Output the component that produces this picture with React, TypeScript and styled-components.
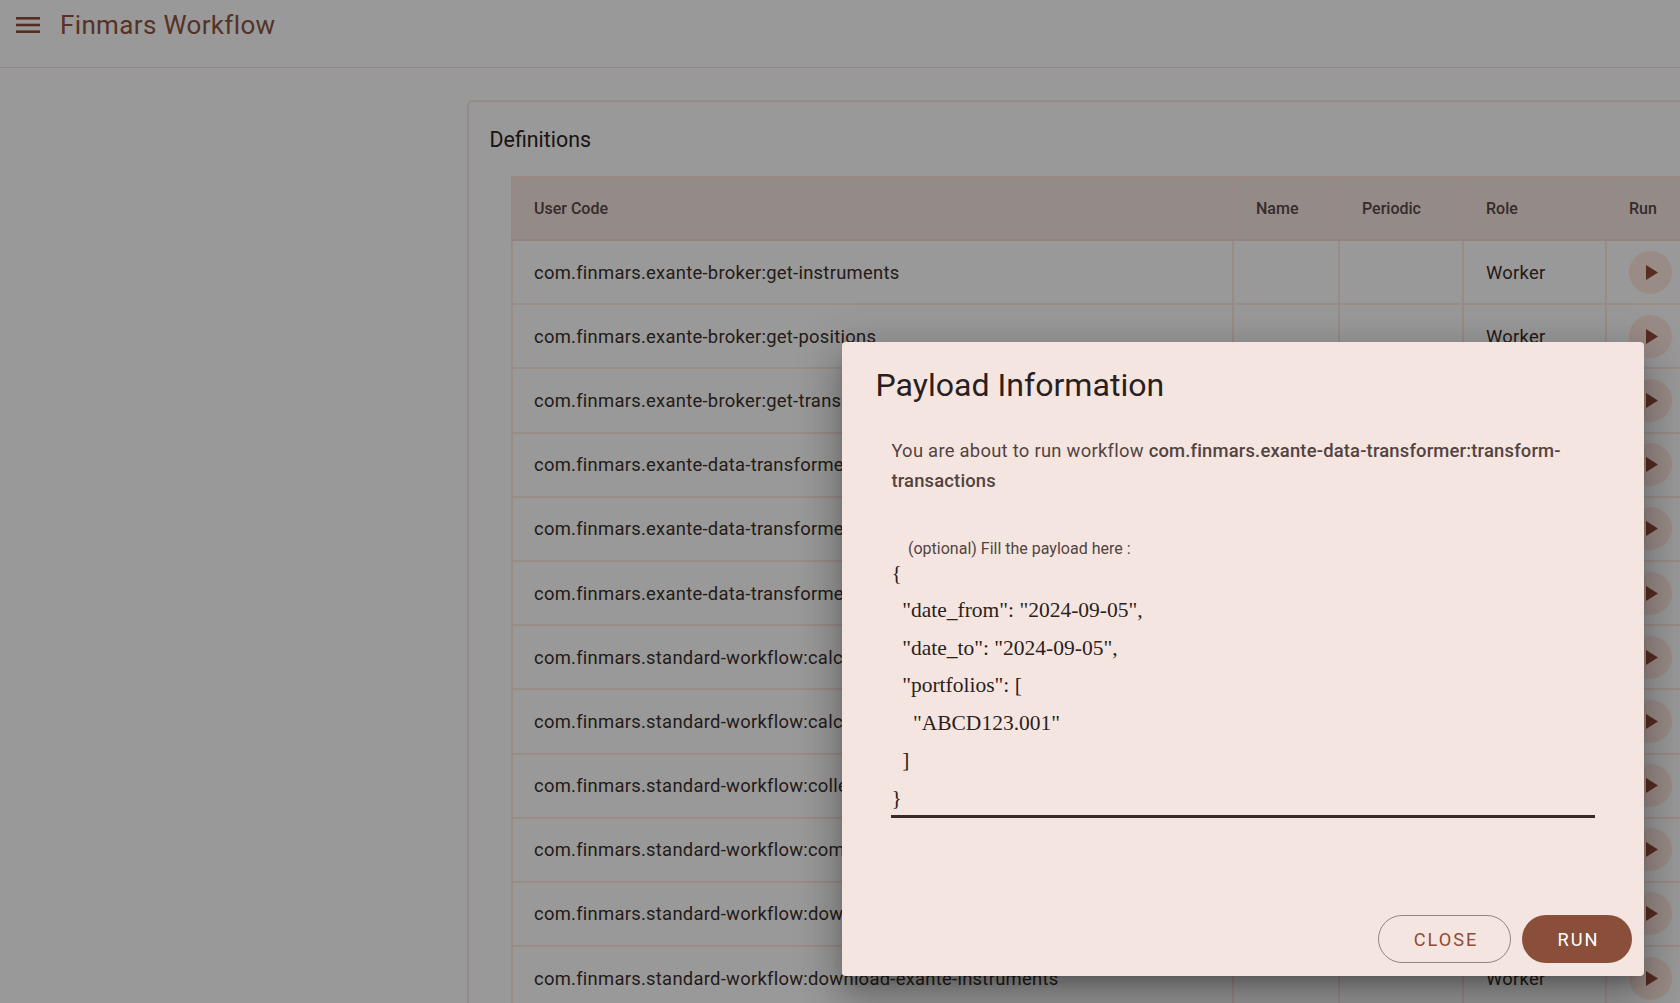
import React from "react";
import styled, { createGlobalStyle } from "styled-components";

const Global = createGlobalStyle`
  html, body { margin: 0; padding: 0; height: 100%; overflow: hidden; background: #fff; }
  body { font-family: Roboto, "Liberation Sans", sans-serif; color: #231917; }
  * { box-sizing: border-box; }
`;

const Page = styled.div`
  width: 1680px;
  height: 1003px;
  overflow: hidden;
  position: relative;
  background: #fff;
`;

const TopBar = styled.header`
  height: 68px;
  display: flex;
  align-items: flex-start;
  gap: 20px;
  padding: 9px 0 0 16px;
  border-bottom: 1px solid #f0e2dd;
`;

const MenuButton = styled.button`
  width: 24px;
  height: 32px;
  border: 0;
  padding: 0;
  background: none;
  display: flex;
  align-items: center;
  color: #8f4c38;
`;

const AppTitle = styled.h1`
  margin: 0;
  font-size: 26px;
  line-height: 32px;
  font-weight: 400;
  letter-spacing: 0.35px;
  color: #8f5441;
`;

const Main = styled.main`
  padding: 32px 0 0 467px;
`;

const Card = styled.section`
  width: 1300px;
  height: 1000px;
  border: 2px solid #f7e6e0;
  border-radius: 6px;
  padding: 26px 0 0 20.5px;
`;

const CardTitle = styled.h2`
  margin: 0 0 24px;
  font-size: 21.4px;
  line-height: 24px;
  font-weight: 400;
  color: #2d2220;
`;

const Table = styled.table`
  margin-left: 21.5px;
  width: 1181px;
  table-layout: fixed;
  border-collapse: collapse;
  font-size: 18.4px;
`;

const HeadCell = styled.th`
  height: 63px;
  padding: 0 22px;
  text-align: left;
  font-size: 16px;
  font-weight: 500;
  background: #f7e7e3;
  border: 2px solid #ffe3d9;
  border-bottom-color: #f5dcd4;
  color: #5a4a46;
  &:first-child { padding-left: 21px; }
`;

const Cell = styled.td`
  height: 64.2px;
  padding: 0 22px;
  border: 2px solid #ffe8e0;
  color: #3d2f2b;
  letter-spacing: 0.27px;
  white-space: nowrap;
  overflow: hidden;
  &:first-child { padding-left: 21px; }
`;

const PlayButton = styled.button`
  width: 43px;
  height: 43px;
  border: 0;
  padding: 0;
  border-radius: 50%;
  background: #ffe8e0;
  display: flex;
  align-items: center;
  justify-content: center;
  color: #8f4c38;
  svg { margin-left: 3px; }
`;

const Backdrop = styled.div`
  position: absolute;
  inset: 0;
  background: rgba(0, 0, 0, 0.4);
`;

const Dialog = styled.div`
  position: absolute;
  left: 842px;
  top: 342px;
  width: 802px;
  height: 634px;
  background: #f5e5e0;
  border-radius: 4px;
  padding: 23px 12px 13px 0;
  display: flex;
  flex-direction: column;
  box-shadow: 0 11px 15px -7px rgba(0, 0, 0, 0.24), 0 24px 38px 3px rgba(0, 0, 0, 0.18), 0 9px 46px 8px rgba(0, 0, 0, 0.14);
`;

const DialogTitle = styled.h2`
  margin: 0 0 31px 33.5px;
  font-size: 32.1px;
  line-height: 40px;
  font-weight: 400;
  color: #2a1f1d;
`;

const Intro = styled.p`
  margin: 0 0 44px 49.4px;
  width: 700px;
  font-size: 18.4px;
  line-height: 30px;
  letter-spacing: 0.27px;
  color: #53433f;
  strong { font-weight: 500; letter-spacing: 0.18px; }
`;

const Label = styled.label`
  display: block;
  margin: 1px 0 0 66px;
  font-size: 16px;
  line-height: 16px;
  color: #53433f;
`;

const Payload = styled.textarea`
  display: block;
  margin: -2.5px 0 0 49.4px;
  width: 704px;
  height: 263.5px;
  padding: 0;
  border: 0;
  border-bottom: 3px solid #3a2a27;
  background: transparent;
  outline: 0;
  resize: none;
  overflow: hidden;
  font-family: "Liberation Serif", serif;
  font-size: 21.5px;
  line-height: 37.5px;
  color: #2a1f1d;
`;

const Actions = styled.div`
  margin-top: auto;
  display: flex;
  justify-content: flex-end;
  gap: 11px;
`;

const ActionButton = styled.button<{ $filled?: boolean }>`
  height: 48px;
  width: ${(p) => (p.$filled ? "110px" : "133px")};
  padding: 0 0 0 3px;
  border-radius: 24px;
  border: ${(p) => (p.$filled ? "0" : "1.5px solid #958481")};
  background: ${(p) => (p.$filled ? "#8a4f3a" : "transparent")};
  color: ${(p) => (p.$filled ? "#fff" : "#8f4c38")};
  font-family: Roboto, sans-serif;
  font-size: 18.2px;
  font-weight: 400;
  letter-spacing: 2px;
`;

const rows = [
  "com.finmars.exante-broker:get-instruments",
  "com.finmars.exante-broker:get-positions",
  "com.finmars.exante-broker:get-transactions",
  "com.finmars.exante-data-transformer:transform-instruments",
  "com.finmars.exante-data-transformer:transform-positions",
  "com.finmars.exante-data-transformer:transform-transactions",
  "com.finmars.standard-workflow:calculate-nav",
  "com.finmars.standard-workflow:calculate-pnl",
  "com.finmars.standard-workflow:collect-data",
  "com.finmars.standard-workflow:complete-import",
  "com.finmars.standard-workflow:download-exante-data",
  "com.finmars.standard-workflow:download-exante-instruments",
];

const payload = `{
  "date_from": "2024-09-05",
  "date_to": "2024-09-05",
  "portfolios": [
    "ABCD123.001"
  ]
}`;

export default function App() {
  return (
    <Page>
      <Global />
      <TopBar>
        <MenuButton aria-label="menu">
          <svg width="24" height="16" viewBox="0 0 24 16" fill="currentColor">
            <rect y="0" width="24" height="2.6" />
            <rect y="6.7" width="24" height="2.6" />
            <rect y="13.4" width="24" height="2.6" />
          </svg>
        </MenuButton>
        <AppTitle>Finmars Workflow</AppTitle>
      </TopBar>
      <Main>
        <Card>
          <CardTitle>Definitions</CardTitle>
          <Table>
            <colgroup>
              <col style={{ width: 721 }} />
              <col style={{ width: 106 }} />
              <col style={{ width: 124 }} />
              <col style={{ width: 143 }} />
              <col style={{ width: 87 }} />
            </colgroup>
            <thead>
              <tr>
                <HeadCell>User Code</HeadCell>
                <HeadCell>Name</HeadCell>
                <HeadCell>Periodic</HeadCell>
                <HeadCell>Role</HeadCell>
                <HeadCell>Run</HeadCell>
              </tr>
            </thead>
            <tbody>
              {rows.map((r) => (
                <tr key={r}>
                  <Cell>{r}</Cell>
                  <Cell />
                  <Cell />
                  <Cell>Worker</Cell>
                  <Cell>
                    <PlayButton aria-label="run">
                      <svg width="12" height="15" viewBox="0 0 12 15" fill="currentColor">
                        <path d="M0 0 L12 7.5 L0 15 Z" />
                      </svg>
                    </PlayButton>
                  </Cell>
                </tr>
              ))}
            </tbody>
          </Table>
        </Card>
      </Main>
      <Backdrop />
      <Dialog role="dialog">
        <DialogTitle>Payload Information</DialogTitle>
        <Intro>
          You are about to run workflow <strong>com.finmars.exante-data-transformer:transform-transactions</strong>
        </Intro>
        <Label htmlFor="payload">(optional) Fill the payload here :</Label>
        <Payload id="payload" readOnly defaultValue={payload} />
        <Actions>
          <ActionButton>CLOSE</ActionButton>
          <ActionButton $filled>RUN</ActionButton>
        </Actions>
      </Dialog>
    </Page>
  );
}
